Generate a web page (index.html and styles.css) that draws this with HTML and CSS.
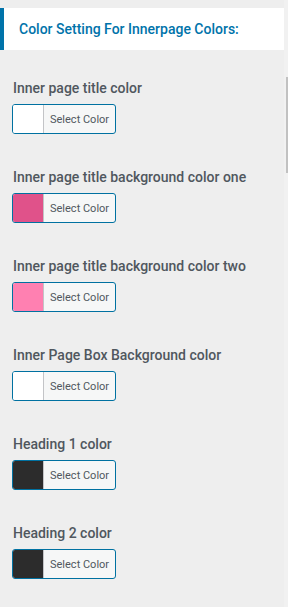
FILE: index.html
```html
<!DOCTYPE html>
<html>
<head>
<meta charset="utf-8">
<link rel="stylesheet" href="styles.css">
</head>
<body>
<div class="panel">
  <div class="section-title">Color Setting For Innerpage Colors:</div>
  <div class="fields">
    <div class="field">
      <div class="label">Inner page title color</div>
      <button class="picker"><span class="swatch" style="background:#ffffff"></span><span class="btn-text">Select Color</span></button>
    </div>
    <div class="field">
      <div class="label">Inner page title background color one</div>
      <button class="picker"><span class="swatch" style="background:#e0528a"></span><span class="btn-text">Select Color</span></button>
    </div>
    <div class="field">
      <div class="label">Inner page title background color two</div>
      <button class="picker"><span class="swatch" style="background:#ff80b1"></span><span class="btn-text">Select Color</span></button>
    </div>
    <div class="field">
      <div class="label">Inner Page Box Background color</div>
      <button class="picker"><span class="swatch" style="background:#ffffff"></span><span class="btn-text">Select Color</span></button>
    </div>
    <div class="field">
      <div class="label">Heading 1 color</div>
      <button class="picker"><span class="swatch" style="background:#2c2c2c"></span><span class="btn-text">Select Color</span></button>
    </div>
    <div class="field">
      <div class="label">Heading 2 color</div>
      <button class="picker"><span class="swatch" style="background:#2c2c2c"></span><span class="btn-text">Select Color</span></button>
    </div>
  </div>
</div>
<div class="scrolltrack"><div class="scrollthumb"></div></div>
</body>
</html>
```

FILE: styles.css
```css
html, body {
  margin: 0;
  padding: 0;
  background: #eeeeee;
  font-family: Roboto, "Liberation Sans", sans-serif;
  overflow: hidden;
}
.panel {
  width: 284px;
  padding-top: 8px;
}
.section-title {
  height: 42px;
  box-sizing: border-box;
  background: #ffffff;
  border-left: 4px solid #0073aa;
  padding-left: 15px;
  display: flex;
  align-items: center;
  font-size: 14px;
  font-weight: 500;
  color: #0073aa;
}
.fields {
  padding: 28px 0 0 12px;
  display: flex;
  flex-direction: column;
  gap: 33px;
}
.field {
  display: flex;
  flex-direction: column;
  align-items: flex-start;
  gap: 6px;
}
.label {
  font-size: 14px;
  line-height: 20px;
  font-weight: 500;
  color: #50575e;
  padding-left: 1px;
}
.picker {
  display: flex;
  align-items: stretch;
  height: 30px;
  padding: 0;
  margin: 0;
  border: 1px solid #0071a1;
  border-radius: 3px;
  background: #f6f7f7;
  overflow: hidden;
  box-sizing: border-box;
  font-family: Roboto, "Liberation Sans", sans-serif;
}
.swatch {
  width: 30px;
  border-right: 1px solid #c3c4c7;
}
.btn-text {
  display: flex;
  align-items: center;
  padding: 0 6px 0 6px;
  font-size: 11px;
  color: #50575e;
}
.scrolltrack {
  position: fixed;
  top: 0;
  right: 0;
  width: 4px;
  height: 100%;
  background: #f1f1f1;
}
.scrollthumb {
  position: absolute;
  top: 77px;
  right: 0;
  width: 2px;
  height: 96px;
  background: #c1c1c1;
}
```
